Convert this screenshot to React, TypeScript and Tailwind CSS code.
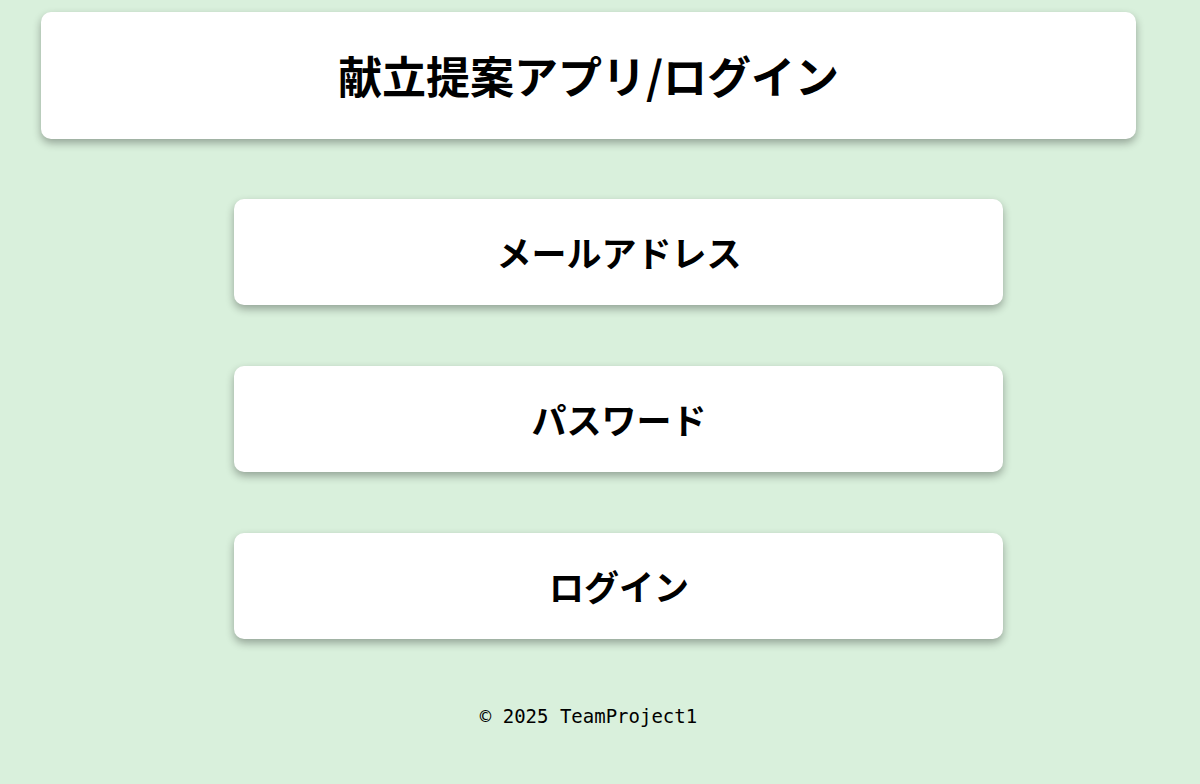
import React from 'react';

const jp = "font-['Noto_Sans_CJK_JP',_'Noto_Sans',_sans-serif]";

const Field: React.FC<{ label: string }> = ({ label }) => (
  <div className="ml-[234px] flex h-[106px] w-[769px] items-center justify-center rounded-[10px] bg-white shadow-[0_4px_9px_rgba(0,0,0,0.32)]">
    <span className={`${jp} pl-[1px] text-[35px] font-bold text-black`}>{label}</span>
  </div>
);

const App: React.FC = () => {
  return (
    <div className="min-h-screen w-full bg-[#d9f0dc] pt-[12px]">
      <header className="ml-[41px] flex h-[127px] w-[1095px] items-center justify-center rounded-[10px] bg-white shadow-[0_4px_9px_rgba(0,0,0,0.32)]">
        <h1 className={`${jp} pb-[2px] text-[44px] font-bold text-black`}>献立提案アプリ/ログイン</h1>
      </header>

      <main className="mt-[60px] flex flex-col gap-[61px]">
        <Field label="メールアドレス" />
        <Field label="パスワード" />
        <Field label="ログイン" />
      </main>

      <footer className="mt-[65px] w-[1177px] text-center">
        <p className="font-['DejaVu_Sans_Mono',_monospace] text-[19px] leading-[24px] text-black">
          © 2025 TeamProject1
        </p>
      </footer>
    </div>
  );
};

export default App;
